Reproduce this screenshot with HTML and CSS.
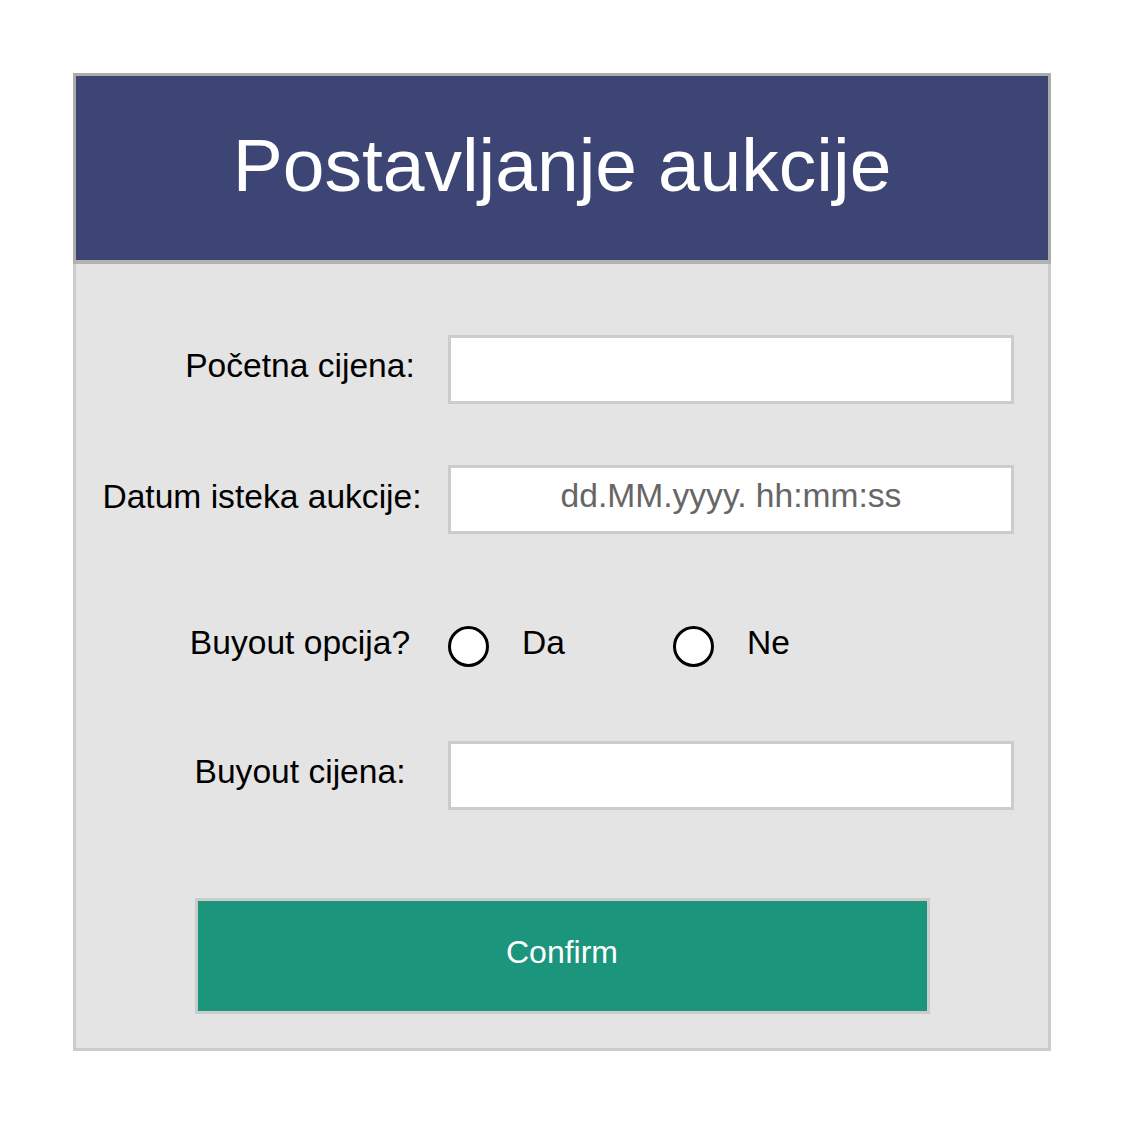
FILE: index.html
```html
<!DOCTYPE html>
<html lang="hr">
<head>
<meta charset="utf-8">
<title>Postavljanje aukcije</title>
<link rel="stylesheet" href="styles.css">
</head>
<body>
<div class="panel">
  <header class="panel-header">
    <h1 class="panel-title">Postavljanje aukcije</h1>
  </header>
  <form class="panel-body">
    <div class="row row-first">
      <label class="label">Početna cijena:</label>
      <div class="field"></div>
    </div>
    <div class="row row-second">
      <label class="label label-wide">Datum isteka aukcije:</label>
      <div class="field field-placeholder">dd.MM.yyyy. hh:mm:ss</div>
    </div>
    <div class="row row-radio">
      <label class="label">Buyout opcija?</label>
      <div class="options">
        <div class="option"><span class="radio"></span><span class="option-text">Da</span></div>
        <div class="option"><span class="radio"></span><span class="option-text">Ne</span></div>
      </div>
    </div>
    <div class="row row-fourth">
      <label class="label">Buyout cijena:</label>
      <div class="field"></div>
    </div>
    <div class="actions">
      <button type="button" class="confirm">Confirm</button>
    </div>
  </form>
</div>
</body>
</html>
```

FILE: styles.css
```css
* { box-sizing: border-box; }
html, body { margin: 0; padding: 0; background: #ffffff; }
body {
  font-family: "Liberation Sans", Arial, sans-serif;
  padding: 73px 0 0 73px;
}
.panel {
  width: 978px;
  display: flex;
  flex-direction: column;
}
.panel-header {
  height: 191px;
  background: #3d4575;
  border: 3px solid #acacac;
  border-bottom-width: 4px;
  border-bottom-color: #b3b3b3;
  display: flex;
  align-items: center;
  justify-content: center;
}
.panel-title {
  margin: 0;
  color: #ffffff;
  font-weight: normal;
  font-size: 75px;
  line-height: 1;
  position: relative;
  top: -3px;
}
.panel-body {
  margin: 0;
  background: #e4e4e4;
  border: 3px solid #cccccc;
  border-top: none;
  padding: 71px 0 34px 0;
  display: flex;
  flex-direction: column;
}
.row {
  display: flex;
  align-items: center;
  height: 69px;
}
.row-second { margin-top: 61px; }
.row-radio { margin-top: 78px; }
.row-fourth { margin-top: 60px; }
.label {
  width: 372px;
  padding-left: 76px;
  text-align: center;
  font-size: 33.6px;
  color: #000000;
  line-height: 1;
  position: relative;
  top: -4px;
}
.label-wide { padding-left: 0; top: -3px; }
.field {
  width: 566px;
  height: 69px;
  background: #ffffff;
  border: 3px solid #cccccc;
}
.field-placeholder {
  display: flex;
  align-items: center;
  justify-content: center;
  font-size: 33.6px;
  color: #666666;
  padding-bottom: 8px;
}
.options { display: flex; }
.option {
  width: 225px;
  display: flex;
  align-items: center;
}
.radio {
  width: 41px;
  height: 41px;
  border: 3px solid #000000;
  border-radius: 50%;
  background: #ffffff;
  flex: none;
}
.option-text {
  margin-left: 33px;
  font-size: 33.6px;
  line-height: 1;
  position: relative;
  top: -4px;
}
.actions {
  margin-top: 88px;
  display: flex;
  justify-content: center;
}
.confirm {
  width: 735px;
  height: 116px;
  background: #1b957c;
  border: 3px solid #cccccc;
  color: #ffffff;
  font-family: "Liberation Sans", Arial, sans-serif;
  font-size: 32px;
  padding: 0 0 7px 0;
  cursor: pointer;
}
```
